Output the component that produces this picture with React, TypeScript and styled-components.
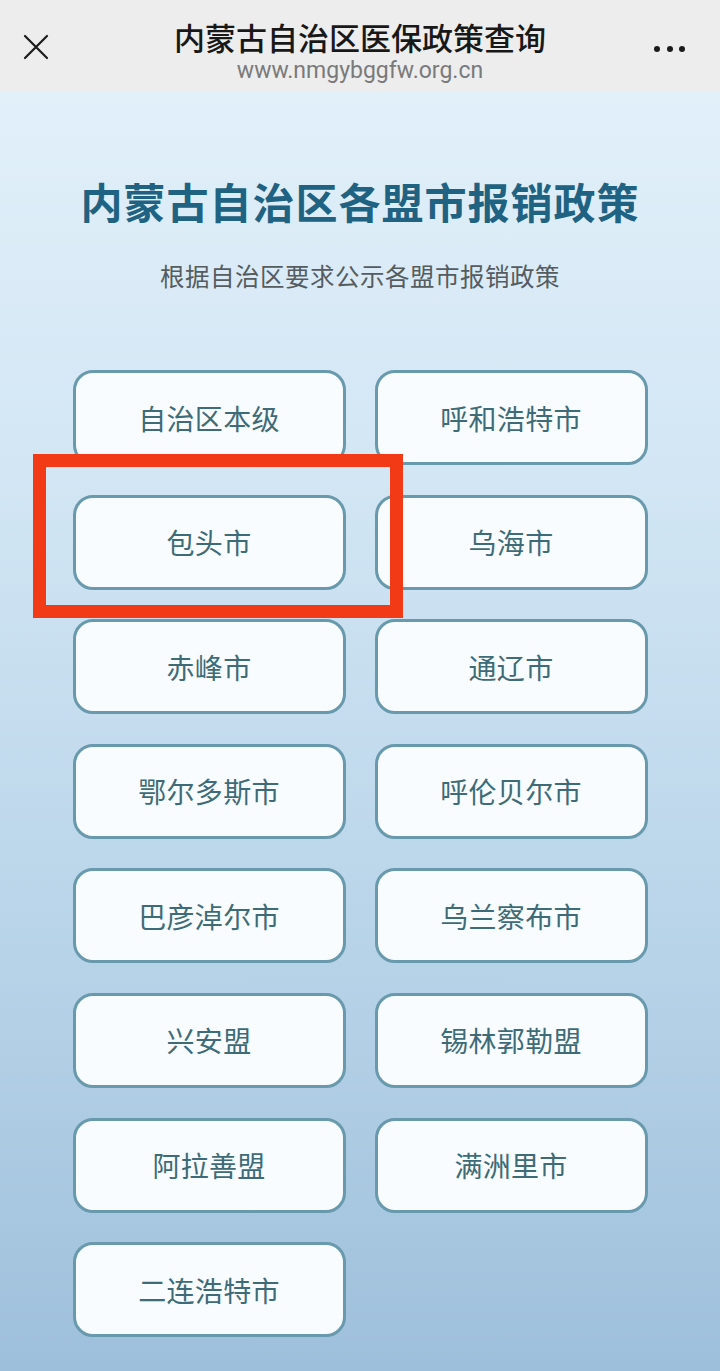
import React from 'react';
import styled, { createGlobalStyle } from 'styled-components';

const regions: string[] = [
  '自治区本级',
  '呼和浩特市',
  '包头市',
  '乌海市',
  '赤峰市',
  '通辽市',
  '鄂尔多斯市',
  '呼伦贝尔市',
  '巴彦淖尔市',
  '乌兰察布市',
  '兴安盟',
  '锡林郭勒盟',
  '阿拉善盟',
  '满洲里市',
  '二连浩特市',
];

const App: React.FC = () => {
  return (
    <Page>
      <GlobalStyle />
      <TopBar>
        <CloseButton aria-label="关闭">
          <svg width="26" height="26" viewBox="0 0 26 26">
            <path d="M2 2 L24 24 M24 2 L2 24" stroke="#1b1b1b" strokeWidth="2.2" strokeLinecap="round" />
          </svg>
        </CloseButton>
        <TitleBlock>
          <BarTitle>内蒙古自治区医保政策查询</BarTitle>
          <BarUrl>www.nmgybggfw.org.cn</BarUrl>
        </TitleBlock>
        <MoreButton aria-label="更多">
          <Dot />
          <Dot />
          <Dot />
        </MoreButton>
      </TopBar>

      <Content>
        <Heading>内蒙古自治区各盟市报销政策</Heading>
        <Subheading>根据自治区要求公示各盟市报销政策</Subheading>
        <Grid>
          {regions.map((name) => (
            <RegionButton key={name}>{name}</RegionButton>
          ))}
          <Highlight />
        </Grid>
      </Content>
    </Page>
  );
};

export default App;

const GlobalStyle = createGlobalStyle`
  html, body {
    margin: 0;
    padding: 0;
  }
  body {
    font-family: 'Noto Sans CJK SC', 'Noto Sans', sans-serif;
  }
`;

const Page = styled.div`
  width: 720px;
  min-height: 1371px;
  display: flex;
  flex-direction: column;
  background: linear-gradient(180deg, #e5f2fb 0%, #d2e6f4 35%, #b7d3e8 70%, #9ebfdb 100%);
`;

const TopBar = styled.header`
  height: 92px;
  display: grid;
  grid-template-columns: 72px 1fr 72px;
  background: #ededed;
`;

const CloseButton = styled.div`
  display: flex;
  align-items: center;
  justify-content: center;
  margin-top: 2px;
`;

const TitleBlock = styled.div`
  display: flex;
  flex-direction: column;
  align-items: center;
  padding-top: 19px;
`;

const BarTitle = styled.div`
  font-size: 31px;
  line-height: 36px;
  font-weight: 500;
  color: #181818;
`;

const BarUrl = styled.div`
  margin-top: 3px;
  font-family: 'Roboto', 'Noto Sans', sans-serif;
  font-size: 23px;
  line-height: 26px;
  color: #7a7a7a;
`;

const MoreButton = styled.div`
  display: flex;
  align-items: center;
  justify-content: center;
  gap: 6.5px;
  margin-top: 6px;
  padding-right: 29px;
`;

const Dot = styled.span`
  width: 6px;
  height: 6px;
  border-radius: 50%;
  background: #1b1b1b;
`;

const Content = styled.main`
  display: flex;
  flex-direction: column;
  align-items: center;
  padding-top: 81px;
`;

const Heading = styled.h1`
  margin: 0;
  font-size: 42px;
  line-height: 56px;
  font-weight: 700;
  color: #1f6282;
  letter-spacing: 1px;
`;

const Subheading = styled.p`
  margin: 32px 0 0;
  font-size: 24.5px;
  line-height: 30px;
  color: #555c60;
  letter-spacing: 0.5px;
`;

const Grid = styled.div`
  position: relative;
  margin-top: 79px;
  width: 575px;
  display: grid;
  grid-template-columns: 1fr 1fr;
  column-gap: 29px;
  row-gap: 29.6px;
`;

const RegionButton = styled.div`
  height: 95px;
  box-sizing: border-box;
  display: flex;
  align-items: center;
  justify-content: center;
  border: 3px solid #6899ac;
  border-radius: 20px;
  background: #f8fcfe;
  color: #3d6b77;
  font-size: 28px;
  letter-spacing: 0.3px;
`;

const Highlight = styled.div`
  position: absolute;
  left: -40px;
  top: 84px;
  width: 370px;
  height: 164px;
  box-sizing: border-box;
  border: 13px solid #f23a16;
  pointer-events: none;
`;
